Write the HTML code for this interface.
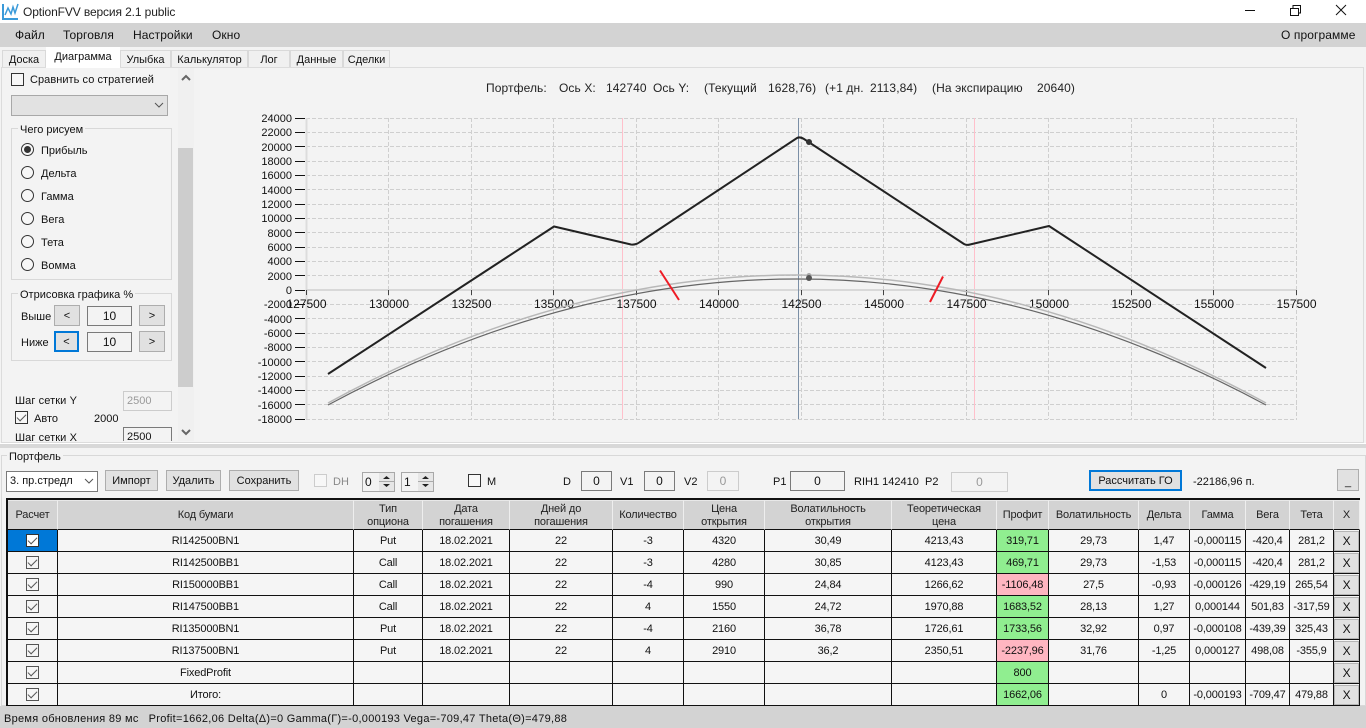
<!DOCTYPE html>
<html><head><meta charset="utf-8"><style>
html,body{margin:0;padding:0}
body{width:1366px;height:728px;overflow:hidden;position:relative;background:#f3f3f3;font:11px "Liberation Sans",sans-serif;color:#111}
div{box-sizing:border-box}
.a{position:absolute}
.t{position:absolute;white-space:nowrap;line-height:14px;font-size:11px;margin-top:1px}
.m{font-size:12px;letter-spacing:.1px;margin-top:0}
.f{position:absolute;background:#f3f3f3;border:1px solid #7a7a7a;text-align:center;line-height:18px;font-size:12px}
.d{border-color:#ccc;color:#999}
.b{position:absolute;background:#e1e1e1;border:1px solid #adadad;text-align:center;font-size:11px;line-height:20px}
.c{position:absolute;width:13px;height:13px;border:1px solid #333;background:#f7f7f7}
.c.k::after,.k2::after{content:"";position:absolute;left:3px;top:0;width:4px;height:8px;border:solid #555;border-width:0 1px 1px 0;transform:rotate(45deg)}
.r{position:absolute;left:21px;width:13px;height:13px;border:1px solid #333;border-radius:50%;background:#f7f7f7}
.g{position:absolute;border:1px solid #d8d8d8}
.l{position:absolute;background:#f3f3f3;padding:0 2px;line-height:13px;font-size:11px;white-space:nowrap;margin-top:1px}
.tab{position:absolute;top:50px;height:17px;background:#f0f0f0;border:1px solid #d9d9d9;border-bottom:0;text-align:center;font-size:11px;line-height:18px;white-space:nowrap}
table{position:absolute;left:6px;top:498px;border-collapse:separate;border-spacing:0;table-layout:fixed;width:1354px;border-left:2px solid #111;border-top:2px solid #111;font-size:11px;letter-spacing:-.15px}
td,th{box-sizing:border-box;padding:0;text-align:center;border-right:1px solid #111;border-bottom:1px solid #111;background:#f5f5f5;height:22px;font-weight:normal;overflow:hidden;white-space:nowrap;position:relative}
th{height:30px;background:#d3d3d3;border-right:1px solid #eee;border-top:1px solid #e8e8e8;padding-top:1px;line-height:13px;white-space:normal;color:#222}
td.p{background:#90ee90}td.n{background:#ffb6c1}
.k2{position:absolute;left:18px;top:4px;width:13px;height:13px;border:1px solid #555;background:#f5f5f5}
td.x{background:#f5f5f5}
.x div{position:absolute;left:0;top:1px;width:25px;height:20px;background:#e1e1e1;border:1px solid #b5b5b5;line-height:18px;font-size:12px}
</style></head><body>

<div class="a" style="left:0;top:0;width:1366px;height:24px;background:#fff"></div>
<svg class="a" style="left:2px;top:3px" width="17" height="17" viewBox="0 0 17 17"><path d="M1 1V16H16" fill="none" stroke="#3a9ad9" stroke-width="2"/><path d="M3 12L6 5L9 11L11 4L13 10L16 1" fill="none" stroke="#3a9ad9" stroke-width="1.5"/></svg>
<div class="t m" style="left:23px;top:5px;color:#222;letter-spacing:-.12px">OptionFVV версия 2.1 public</div>
<svg class="a" style="left:1240px;top:0" width="120" height="24"><path d="M5 10.5H15" stroke="#111"/><path d="M50.5 8.5H58.5V15.5H50.5ZM53 8V5.5H60.5V13H59" fill="none" stroke="#111"/><path d="M96 5L106 15M106 5L96 15" stroke="#111"/></svg>

<div class="a" style="left:0;top:23px;width:1366px;height:24px;background:#d3d3d3"></div>
<div class="t m" style="left:15px;top:28px">Файл</div>
<div class="t m" style="left:63px;top:28px">Торговля</div>
<div class="t m" style="left:133px;top:28px">Настройки</div>
<div class="t m" style="left:212px;top:28px">Окно</div>
<div class="t m" style="left:1281px;top:28px">О программе</div>

<div class="a" style="left:1px;top:67px;width:1363px;height:376px;border:1px solid #dcdcdc;background:#f3f3f3"></div>
<div class="tab" style="left:2px;width:44px">Доска</div>
<div class="tab" style="left:46px;top:47px;width:74px;height:21px;background:#fff;border:0;line-height:20px">Диаграмма</div>
<div class="tab" style="left:120px;width:51px">Улыбка</div>
<div class="tab" style="left:171px;width:77px">Калькулятор</div>
<div class="tab" style="left:248px;width:42px">Лог</div>
<div class="tab" style="left:290px;width:53px">Данные</div>
<div class="tab" style="left:343px;width:47px">Сделки</div>

<!-- left panel -->
<div class="a" style="left:178px;top:68px;width:16px;height:373px;background:#f0f0f0"></div>
<div class="a" style="left:178px;top:148px;width:15px;height:239px;background:#cdcdcd"></div>
<svg class="a" style="left:178px;top:72px" width="16" height="368"><path d="M4 8L8 4L12 8" fill="none" stroke="#666" stroke-width="2"/><path d="M4 358L8 362L12 358" fill="none" stroke="#666" stroke-width="2"/></svg>

<div class="c" style="left:11px;top:73px"></div>
<div class="t" style="left:30px;top:72px;letter-spacing:.05px">Сравнить со стратегией</div>
<div class="a" style="left:11px;top:95px;width:157px;height:21px;background:#e2e2e2;border:1px solid #a8a8a8"></div>
<svg class="a" style="left:154px;top:102px" width="10" height="8"><path d="M1 1L5 5L9 1" fill="none" stroke="#555"/></svg>

<div class="g" style="left:11px;top:128px;width:161px;height:152px"></div>
<div class="l" style="left:18px;top:123px">Чего рисуем</div>
<div class="r" style="top:143px"></div><div class="a" style="left:24px;top:146px;width:7px;height:7px;border-radius:50%;background:#333"></div>
<div class="t" style="left:41px;top:143px">Прибыль</div>
<div class="r" style="top:166px"></div><div class="t" style="left:41px;top:166px">Дельта</div>
<div class="r" style="top:189px"></div><div class="t" style="left:41px;top:189px">Гамма</div>
<div class="r" style="top:212px"></div><div class="t" style="left:41px;top:212px">Вега</div>
<div class="r" style="top:235px"></div><div class="t" style="left:41px;top:235px">Тета</div>
<div class="r" style="top:258px"></div><div class="t" style="left:41px;top:258px">Вомма</div>

<div class="g" style="left:11px;top:293px;width:161px;height:68px"></div>
<div class="l" style="left:18px;top:288px">Отрисовка графика %</div>
<div class="t" style="left:21px;top:309px">Выше</div>
<div class="b" style="left:54px;top:305px;width:26px;height:21px">&lt;</div>
<div class="f" style="left:87px;top:306px;width:45px;height:20px">10</div>
<div class="b" style="left:139px;top:305px;width:26px;height:21px">&gt;</div>
<div class="t" style="left:21px;top:335px">Ниже</div>
<div class="b" style="left:54px;top:331px;width:25px;height:21px;border:2px solid #0078d7;line-height:18px">&lt;</div>
<div class="f" style="left:87px;top:332px;width:45px;height:20px">10</div>
<div class="b" style="left:139px;top:331px;width:26px;height:21px">&gt;</div>

<div class="t" style="left:15px;top:393px;letter-spacing:.1px">Шаг сетки Y</div>
<div class="f d" style="left:123px;top:391px;width:49px;height:20px;text-align:left;padding-left:3px;font-size:11px">2500</div>
<div class="c k" style="left:15px;top:411px"></div>
<div class="t" style="left:34px;top:411px">Авто</div>
<div class="t" style="left:94px;top:411px">2000</div>
<div class="a" style="left:0;top:427px;width:177px;height:14px;overflow:hidden">
<div class="t" style="left:15px;top:3px;letter-spacing:.1px">Шаг сетки X</div>
<div class="f" style="left:123px;top:0;width:49px;height:20px;text-align:left;padding-left:3px;font-size:11px">2500</div>
</div>

<!-- chart -->
<svg class="a" style="left:0;top:0" width="1366" height="445" font-family="'Liberation Sans',sans-serif">
<path fill="none" stroke="#cfcfcf" stroke-dasharray="4 2" d="M306 118.5H1297M306 132.5H1297M306 146.5H1297M306 161.5H1297M306 175.5H1297M306 189.5H1297M306 204.5H1297M306 218.5H1297M306 232.5H1297M306 247.5H1297M306 261.5H1297M306 275.5H1297M306 304.5H1297M306 318.5H1297M306 333.5H1297M306 347.5H1297M306 361.5H1297M306 376.5H1297M306 390.5H1297M306 404.5H1297M306 419.5H1297M388.5 118V419M471.5 118V419M553.5 118V419M636.5 118V419M718.5 118V419M801.5 118V419M883.5 118V419M966.5 118V419M1048.5 118V419M1131.5 118V419M1213.5 118V419M1296.5 118V419"/>
<path d="M622.5 118V419M974.5 118V419" stroke="#ffc0cb"/>
<path d="M306.5 118V419" stroke="#dcdcdc" stroke-width="2"/>
<path d="M306 290H1297" stroke="#d8d8d8" stroke-width="2"/>
<path d="M798.5 118V419" stroke="#7b8fa6"/>
<path stroke="#111" d="M295 118.5H305M295 132.5H305M295 146.5H305M295 161.5H305M295 175.5H305M295 189.5H305M295 204.5H305M295 218.5H305M295 232.5H305M295 247.5H305M295 261.5H305M295 275.5H305M295 290.5H305M295 304.5H305M295 318.5H305M295 333.5H305M295 347.5H305M295 361.5H305M295 376.5H305M295 390.5H305M295 404.5H305M295 419.5H305"/>
<path stroke="#444" d="M306.5 290V295M388.5 290V295M471.5 290V295M553.5 290V295M636.5 290V295M718.5 290V295M801.5 290V295M883.5 290V295M966.5 290V295M1048.5 290V295M1131.5 290V295M1213.5 290V295M1296.5 290V295"/>
<g font-size="11" text-anchor="end" fill="#111">
<text x="292" y="122">24000</text><text x="292" y="136">22000</text><text x="292" y="151">20000</text><text x="292" y="165">18000</text><text x="292" y="179">16000</text><text x="292" y="194">14000</text><text x="292" y="208">12000</text><text x="292" y="222">10000</text><text x="292" y="237">8000</text><text x="292" y="251">6000</text><text x="292" y="265">4000</text><text x="292" y="280">2000</text><text x="292" y="294">0</text><text x="292" y="308">-2000</text><text x="292" y="323">-4000</text><text x="292" y="337">-6000</text><text x="292" y="351">-8000</text><text x="292" y="366">-10000</text><text x="292" y="380">-12000</text><text x="292" y="394">-14000</text><text x="292" y="409">-16000</text><text x="292" y="423">-18000</text>
</g>
<g font-size="12" text-anchor="middle" fill="#111">
<text x="306.5" y="308">127500</text><text x="389" y="308">130000</text><text x="471.5" y="308">132500</text><text x="554" y="308">135000</text><text x="636.5" y="308">137500</text><text x="719" y="308">140000</text><text x="801.5" y="308">142500</text><text x="884" y="308">145000</text><text x="966.5" y="308">147500</text><text x="1049" y="308">150000</text><text x="1131.5" y="308">152500</text><text x="1214" y="308">155000</text><text x="1296.5" y="308">157500</text>
</g>
<path d="M328 374L554 226.5L631 244.5Q636 245 640 242L797 138Q800 136.500 804 139L964 244Q966.500 245.500 970 244.500L1049 226L1266 368" fill="none" stroke="#222" stroke-width="2"/>
<path d="M328 403Q797 147 1266 403" fill="none" stroke="#b8b8b8" stroke-width="1.500"/>
<path d="M328 405Q797 153 1266 405" fill="none" stroke="#666" stroke-width="1.200"/>
<circle cx="809" cy="142" r="3" fill="#333"/>
<circle cx="809" cy="275.500" r="2.500" fill="#aaa"/>
<circle cx="809" cy="278" r="3" fill="#555"/>
<path d="M660 270.500L679 300M930 302L943 276.500" stroke="#ee1c25" stroke-width="2"/>
<g font-size="12" fill="#222" letter-spacing=".1">
<text x="486" y="92">Портфель:</text><text x="559" y="92">Ось X:</text><text x="606" y="92">142740</text><text x="653" y="92">Ось Y:</text><text x="704" y="92">(Текущий</text><text x="768" y="92">1628,76)</text><text x="825" y="92">(+1 дн.</text><text x="870" y="92">2113,84)</text><text x="932" y="92">(На экспирацию</text><text x="1037" y="92">20640)</text>
</g>
</svg>

<!-- splitter + portfolio -->
<div class="a" style="left:0;top:443px;width:1366px;height:5px;background:#d8d8d8;border-top:1px solid #fff"></div>
<div class="g" style="left:1px;top:455px;width:1365px;height:251px"></div>
<div class="l" style="left:7px;top:450px">Портфель</div>

<div class="a" style="left:6px;top:471px;width:92px;height:21px;background:#fff;border:1px solid #7a7a7a;padding-left:3px;line-height:19px">3. пр.стредл</div>
<svg class="a" style="left:84px;top:478px" width="10" height="8"><path d="M1 1L5 5L9 1" fill="none" stroke="#555"/></svg>
<div class="b" style="left:105px;top:470px;width:53px;height:21px">Импорт</div>
<div class="b" style="left:166px;top:470px;width:55px;height:21px">Удалить</div>
<div class="b" style="left:229px;top:470px;width:70px;height:21px">Сохранить</div>
<div class="c" style="left:314px;top:474px;border-color:#ccc"></div>
<div class="t" style="left:333px;top:474px;color:#888">DH</div>
<div class="a" style="left:362px;top:472px;width:33px;height:20px;border:1px solid #a8a8a8;padding-left:2px;line-height:18px;font-size:12px">0</div>
<div class="a" style="left:401px;top:472px;width:33px;height:20px;border:1px solid #a8a8a8;padding-left:2px;line-height:18px;font-size:12px">1</div>
<svg class="a" style="left:378px;top:473px" width="60" height="18"><rect x="1" y="0" width="15" height="18" fill="#e6e6e6"/><rect x="40" y="0" width="15" height="18" fill="#e6e6e6"/><path d="M1 8.500H16M40 8.500H55" stroke="#aaa"/><path d="M5 6L8.500 3L12 6ZM5 11L8.500 14L12 11ZM44 6L47.500 3L51 6ZM44 11L47.500 14L51 11Z" fill="#222"/></svg>
<div class="c" style="left:468px;top:474px"></div>
<div class="t" style="left:487px;top:474px">M</div>
<div class="t" style="left:563px;top:474px">D</div>
<div class="f" style="left:581px;top:471px;width:31px;height:20px">0</div>
<div class="t" style="left:620px;top:474px">V1</div>
<div class="f" style="left:644px;top:471px;width:31px;height:20px">0</div>
<div class="t" style="left:684px;top:474px">V2</div>
<div class="f d" style="left:707px;top:471px;width:32px;height:20px">0</div>
<div class="t" style="left:773px;top:474px">P1</div>
<div class="f" style="left:790px;top:471px;width:55px;height:20px">0</div>
<div class="t" style="left:854px;top:474px">RIH1 142410</div>
<div class="t" style="left:925px;top:474px">P2</div>
<div class="f d" style="left:951px;top:472px;width:57px;height:20px">0</div>
<div class="b" style="left:1089px;top:470px;width:93px;height:21px;border:2px solid #0078d7;line-height:18px">Рассчитать ГО</div>
<div class="t" style="left:1193px;top:474px">-22186,96 п.</div>
<div class="b" style="left:1337px;top:469px;width:22px;height:22px;line-height:24px">_</div>

<table>
<colgroup><col style="width:50px"><col style="width:296px"><col style="width:69px"><col style="width:87px"><col style="width:103px"><col style="width:71px"><col style="width:81px"><col style="width:127px"><col style="width:105px"><col style="width:52px"><col style="width:90px"><col style="width:51px"><col style="width:56px"><col style="width:44px"><col style="width:44px"><col style="width:26px"></colgroup>
<tr><th>Расчет</th><th>Код бумаги</th><th>Тип<br>опциона</th><th>Дата<br>погашения</th><th>Дней до<br>погашения</th><th>Количество</th><th>Цена<br>открытия</th><th>Волатильность<br>открытия</th><th>Теоретическая<br>цена</th><th>Профит</th><th>Волатильность</th><th>Дельта</th><th>Гамма</th><th>Вега</th><th>Тета</th><th>X</th></tr>
<tr><td style="background:#0078d7"><div class="k2" style="background:#fff;border-color:#333"></div></td><td>RI142500BN1</td><td>Put</td><td>18.02.2021</td><td>22</td><td>-3</td><td>4320</td><td>30,49</td><td>4213,43</td><td class="p">319,71</td><td>29,73</td><td>1,47</td><td>-0,000115</td><td>-420,4</td><td>281,2</td><td class="x"><div>X</div></td></tr>
<tr><td><div class="k2"></div></td><td>RI142500BB1</td><td>Call</td><td>18.02.2021</td><td>22</td><td>-3</td><td>4280</td><td>30,85</td><td>4123,43</td><td class="p">469,71</td><td>29,73</td><td>-1,53</td><td>-0,000115</td><td>-420,4</td><td>281,2</td><td class="x"><div>X</div></td></tr>
<tr><td><div class="k2"></div></td><td>RI150000BB1</td><td>Call</td><td>18.02.2021</td><td>22</td><td>-4</td><td>990</td><td>24,84</td><td>1266,62</td><td class="n">-1106,48</td><td>27,5</td><td>-0,93</td><td>-0,000126</td><td>-429,19</td><td>265,54</td><td class="x"><div>X</div></td></tr>
<tr><td><div class="k2"></div></td><td>RI147500BB1</td><td>Call</td><td>18.02.2021</td><td>22</td><td>4</td><td>1550</td><td>24,72</td><td>1970,88</td><td class="p">1683,52</td><td>28,13</td><td>1,27</td><td>0,000144</td><td>501,83</td><td>-317,59</td><td class="x"><div>X</div></td></tr>
<tr><td><div class="k2"></div></td><td>RI135000BN1</td><td>Put</td><td>18.02.2021</td><td>22</td><td>-4</td><td>2160</td><td>36,78</td><td>1726,61</td><td class="p">1733,56</td><td>32,92</td><td>0,97</td><td>-0,000108</td><td>-439,39</td><td>325,43</td><td class="x"><div>X</div></td></tr>
<tr><td><div class="k2"></div></td><td>RI137500BN1</td><td>Put</td><td>18.02.2021</td><td>22</td><td>4</td><td>2910</td><td>36,2</td><td>2350,51</td><td class="n">-2237,96</td><td>31,76</td><td>-1,25</td><td>0,000127</td><td>498,08</td><td>-355,9</td><td class="x"><div>X</div></td></tr>
<tr><td><div class="k2"></div></td><td>FixedProfit</td><td></td><td></td><td></td><td></td><td></td><td></td><td></td><td class="p">800</td><td></td><td></td><td></td><td></td><td></td><td class="x"><div>X</div></td></tr>
<tr><td><div class="k2"></div></td><td>Итого:</td><td></td><td></td><td></td><td></td><td></td><td></td><td></td><td class="p">1662,06</td><td></td><td>0</td><td>-0,000193</td><td>-709,47</td><td>479,88</td><td class="x"><div>X</div></td></tr>
</table>

<div class="a" style="left:0;top:706px;width:1366px;height:22px;background:#d3d3d3"></div>
<div class="t" style="left:4px;top:711px;letter-spacing:.28px">Время обновления 89 мс&nbsp;&nbsp; Profit=1662,06 Delta(Δ)=0 Gamma(Г)=-0,000193 Vega=-709,47 Theta(Θ)=479,88</div>
</body></html>
